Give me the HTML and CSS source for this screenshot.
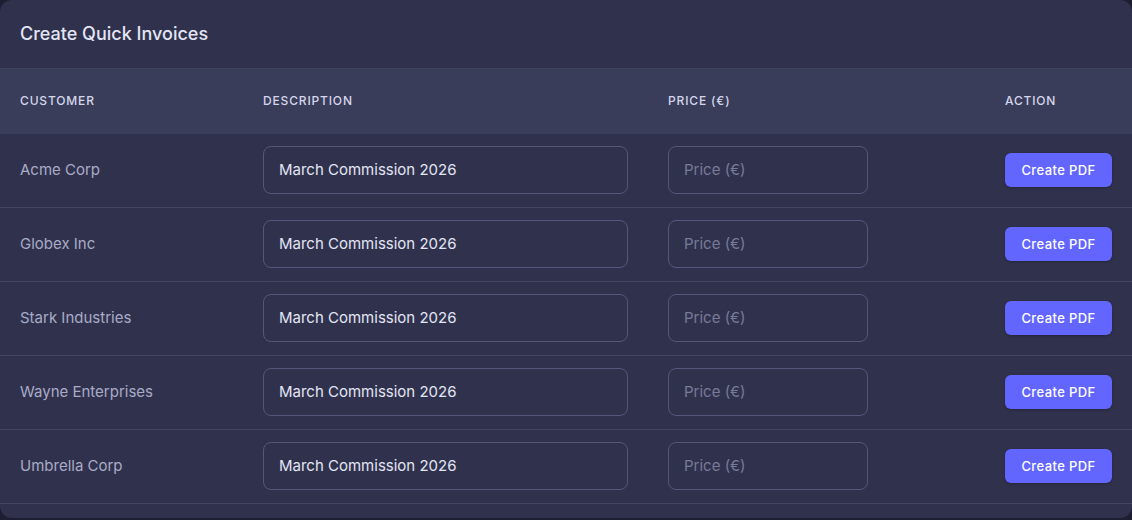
FILE: index.html
```html
<!DOCTYPE html>
<html lang="en">
<head>
<meta charset="utf-8">
<title>Create Quick Invoices</title>
<link rel="stylesheet" href="styles.css">
</head>
<body>
<section class="card">
  <header class="card-head">
    <h1 class="card-title">Create Quick Invoices</h1>
  </header>
  <div class="table">
    <div class="row head">
      <div class="cell">Customer</div>
      <div class="cell">Description</div>
      <div class="cell">Price (€)</div>
      <div class="cell">Action</div>
    </div>
    <div class="row">
      <div class="cell name">Acme Corp</div>
      <div class="cell"><input class="field desc" type="text" value="March Commission 2026"></div>
      <div class="cell"><input class="field price" type="text" placeholder="Price (€)"></div>
      <div class="cell"><button class="btn" type="button">Create PDF</button></div>
    </div>
    <div class="row">
      <div class="cell name">Globex Inc</div>
      <div class="cell"><input class="field desc" type="text" value="March Commission 2026"></div>
      <div class="cell"><input class="field price" type="text" placeholder="Price (€)"></div>
      <div class="cell"><button class="btn" type="button">Create PDF</button></div>
    </div>
    <div class="row">
      <div class="cell name">Stark Industries</div>
      <div class="cell"><input class="field desc" type="text" value="March Commission 2026"></div>
      <div class="cell"><input class="field price" type="text" placeholder="Price (€)"></div>
      <div class="cell"><button class="btn" type="button">Create PDF</button></div>
    </div>
    <div class="row">
      <div class="cell name">Wayne Enterprises</div>
      <div class="cell"><input class="field desc" type="text" value="March Commission 2026"></div>
      <div class="cell"><input class="field price" type="text" placeholder="Price (€)"></div>
      <div class="cell"><button class="btn" type="button">Create PDF</button></div>
    </div>
    <div class="row">
      <div class="cell name">Umbrella Corp</div>
      <div class="cell"><input class="field desc" type="text" value="March Commission 2026"></div>
      <div class="cell"><input class="field price" type="text" placeholder="Price (€)"></div>
      <div class="cell"><button class="btn" type="button">Create PDF</button></div>
    </div>
  </div>
</section>
</body>
</html>
```

FILE: styles.css
```css
* { box-sizing: border-box; }
html, body { margin: 0; padding: 0; }
body {
  background: #1d1e31;
  font-family: Inter, "Noto Sans", sans-serif;
  height: 520px;
  overflow: hidden;
}
.card {
  background: #30324d;
  border-radius: 12px;
  height: 518px;
  overflow: hidden;
}
.card-head {
  height: 69px;
  display: flex;
  align-items: center;
  padding: 0 20px 2px;
  border-bottom: 1px solid #43465f;
}
.card-title {
  margin: 0;
  font-size: 18px;
  font-weight: 500;
  color: #e3e5f4;
}
.row {
  display: grid;
  grid-template-columns: 243px 405px 337px 1fr;
  align-items: center;
  padding: 0 20px 1px;
  height: 74px;
  border-bottom: 1px solid #43465f;
}
.row.head {
  height: 65px;
  padding-bottom: 3px;
  background: #3a3d5a;
  border-bottom: none;
  font-size: 12px;
  font-weight: 500;
  letter-spacing: 0.07em;
  text-transform: uppercase;
  color: #d4d6ec;
}
.name {
  font-size: 15px;
  color: #a9abc7;
  margin-bottom: 2px;
}
.field {
  display: block;
  height: 48px;
  border: 1px solid #54577a;
  border-radius: 8px;
  background: #30324d;
  padding: 0 15px 2px;
  font-family: inherit;
  font-size: 15px;
  color: #e3e5f4;
  outline: none;
}
.field::placeholder { color: #777a98; }
.desc { width: 365px; }
.price { width: 200px; }
.btn {
  height: 34px;
  width: 107px;
  border: none;
  border-radius: 6px;
  background: #6366fe;
  color: #ffffff;
  font-family: inherit;
  font-size: 13px;
  font-weight: 500;
  letter-spacing: 0.03em;
  box-shadow: 0 1px 3px rgba(0,0,0,0.25);
  cursor: pointer;
}
```
